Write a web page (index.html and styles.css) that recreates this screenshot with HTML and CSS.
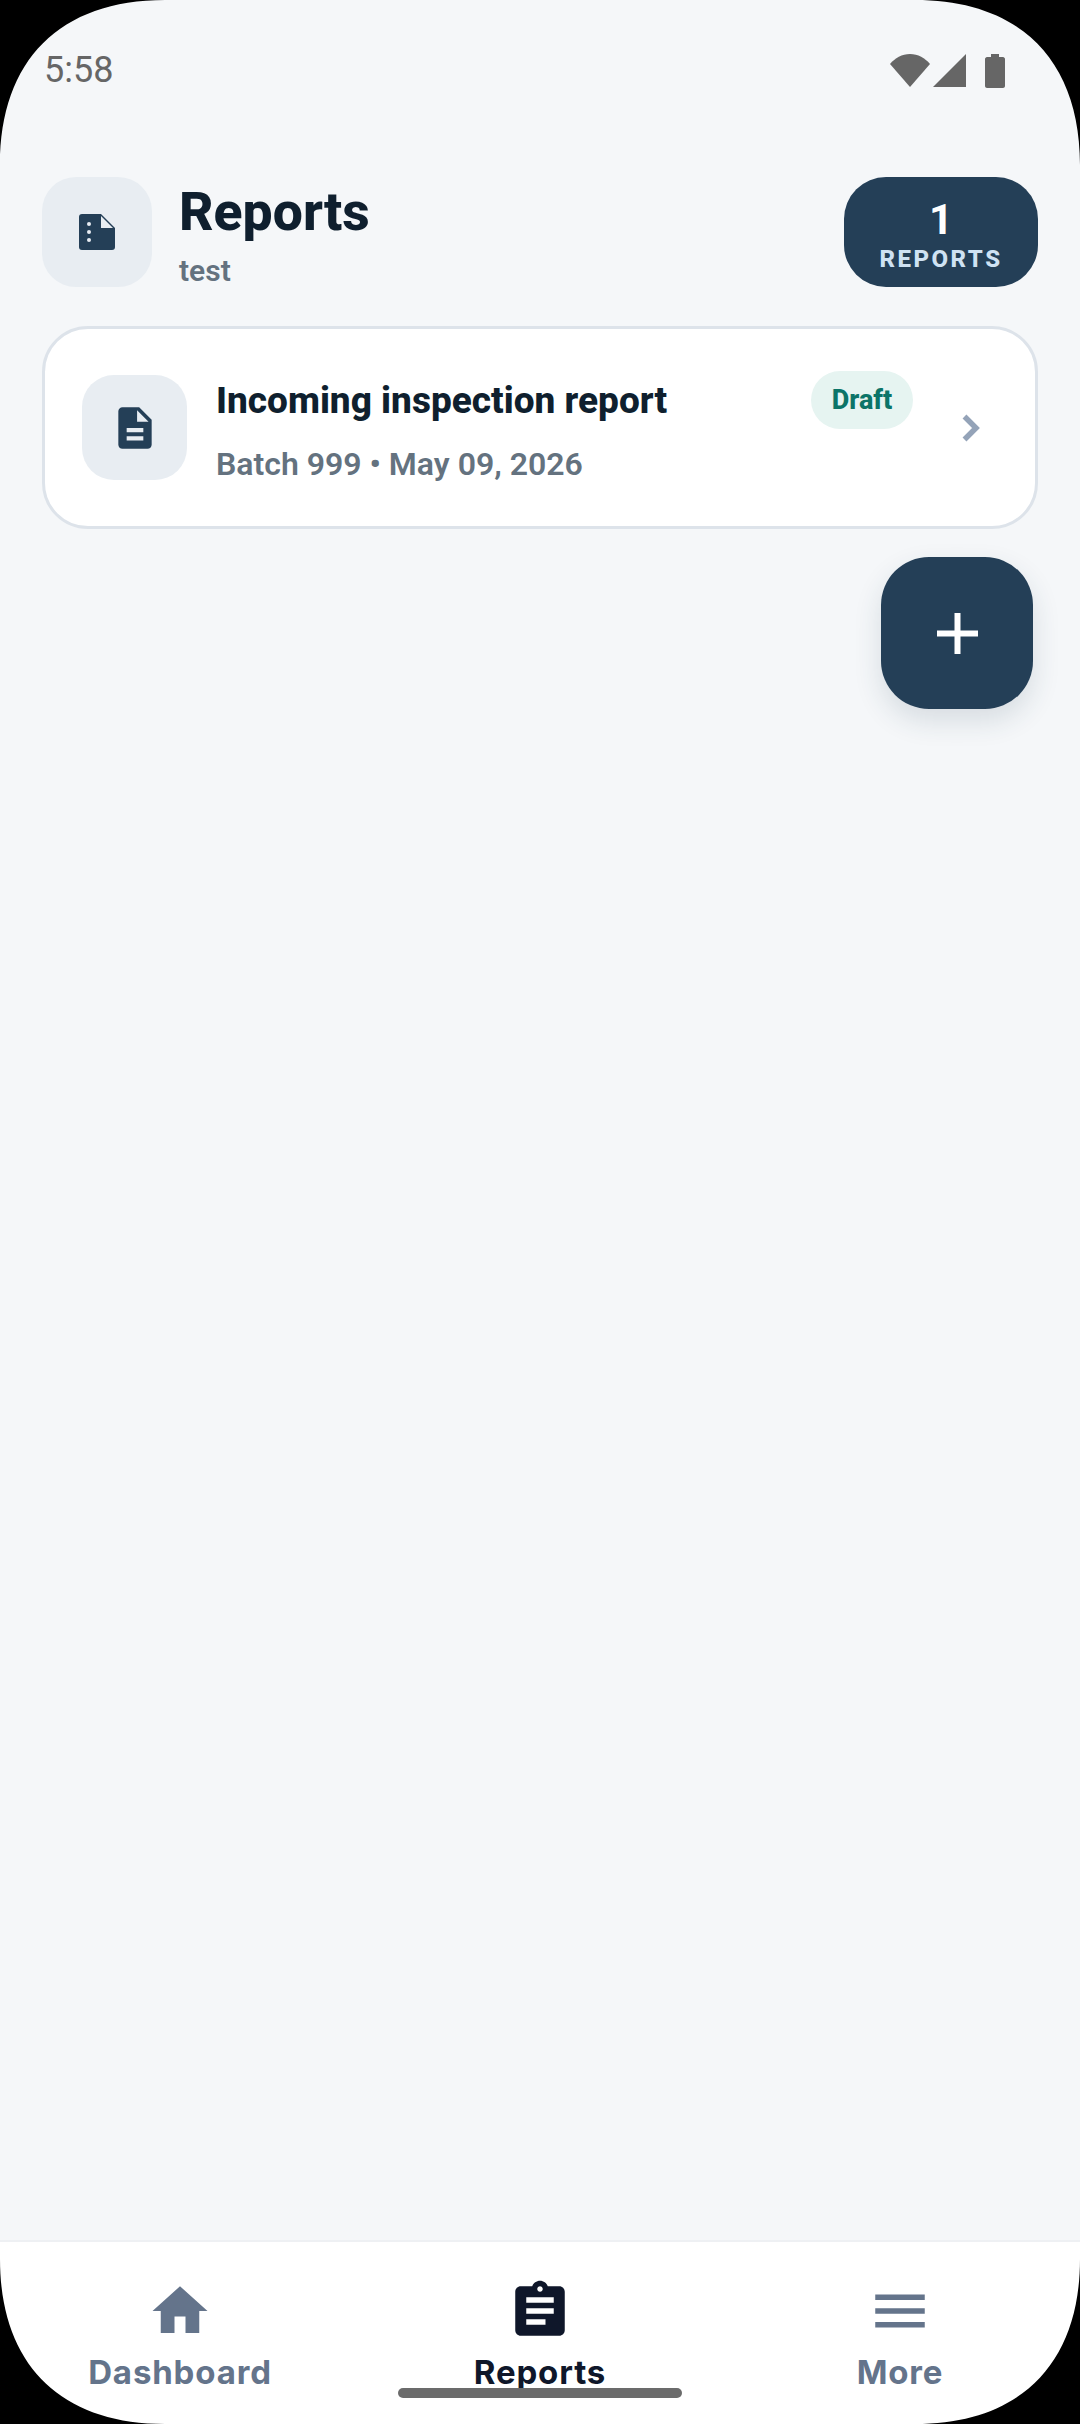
FILE: index.html
```html
<!DOCTYPE html>
<html lang="en">
<head>
    <meta charset="UTF-8">
    <meta name="viewport" content="width=device-width, initial-scale=1.0">
    <title>Reports</title>
    <link rel="stylesheet" href="styles.css">
</head>
<body>
    <div class="screen">
        <div class="status-bar">
            <span class="status-time">5:58</span>
            <div class="status-icons">
                <svg class="icon-wifi" viewBox="0 0 40 33"><path d="M0 10C5 4 12 0 20 0s15 4 20 10L20 33z"/></svg>
                <svg class="icon-signal" viewBox="0 0 33 33"><path d="M33 0v33H0z"/></svg>
                <svg class="icon-battery" viewBox="0 0 20 34"><path d="M6 0h8v3h4c1 0 2 1 2 2v27c0 1-1 2-2 2H2c-1 0-2-1-2-2V5c0-1 1-2 2-2h4z"/></svg>
            </div>
        </div>

        <header class="header">
            <div class="header-icon">
                <svg viewBox="0 0 36 36" width="36" height="36">
                    <path class="fill-dark" d="M3 0h19l14 14v19c0 2-1 3-3 3H3c-2 0-3-1-3-3V3c0-2 1-3 3-3z"/>
                    <path class="fill-soft" d="M22 2v12h12z"/>
                    <circle class="fill-soft" cx="10" cy="10" r="2"/>
                    <circle class="fill-soft" cx="10" cy="18" r="2"/>
                    <circle class="fill-soft" cx="10" cy="26" r="2"/>
                </svg>
            </div>
            <div class="header-text">
                <h1>Reports</h1>
                <p>test</p>
            </div>
            <div class="count-badge">
                <span class="count-number">1</span>
                <span class="count-label">REPORTS</span>
            </div>
        </header>

        <div class="report-card">
            <div class="report-icon">
                <svg viewBox="0 0 24 24" width="50" height="50">
                    <path class="fill-dark" d="M14 2H6c-1.1 0-2 .9-2 2v16c0 1.1.9 2 2 2h12c1.100 0 2-.9 2-2V8l-6-6zm2 16H8v-2h8v2zm0-4H8v-2h8v2zm-3-5V3.500L18.500 9H13z"/>
                </svg>
            </div>
            <div class="report-body">
                <div class="report-top">
                    <span class="report-title">Incoming inspection report</span>
                    <span class="report-status">Draft</span>
                </div>
                <div class="report-meta">Batch 999 • May 09, 2026</div>
            </div>
            <svg class="chevron" viewBox="0 0 18 28"><path d="M2.500 2.500L14 14 2.500 25.500" fill="none" stroke="#94a3b8" stroke-width="5.500"/></svg>
        </div>

        <button class="fab">
            <svg viewBox="0 0 41 41" width="41" height="41"><path d="M17.500 0h6v17.500H41v6H23.500V41h-6V23.500H0v-6h17.500z" fill="#fff"/></svg>
        </button>

        <nav class="bottom-nav">
            <div class="nav-item">
                <svg viewBox="0 0 24 24" width="66" height="66"><path d="M10 20v-6h4v6h5v-8h3L12 3 2 12h3v8z"/></svg>
                <span>Dashboard</span>
            </div>
            <div class="nav-item active">
                <svg viewBox="0 0 24 24" width="66" height="66"><path d="M19 3h-4.180C14.400 1.840 13.300 1 12 1c-1.300 0-2.400.84-2.820 2H5c-1.100 0-2 .9-2 2v14c0 1.100.9 2 2 2h14c1.100 0 2-.9 2-2V5c0-1.100-.9-2-2-2zm-7 0c.55 0 1 .45 1 1s-.45 1-1 1-1-.45-1-1 .45-1 1-1zm2 14H7v-2h7v2zm3-4H7v-2h10v2zm0-4H7V7h10v2z"/></svg>
                <span>Reports</span>
            </div>
            <div class="nav-item">
                <svg viewBox="0 0 24 24" width="66" height="66"><path d="M3 18h18v-2H3v2zm0-5h18v-2H3v2zm0-7v2h18V6H3z"/></svg>
                <span>More</span>
            </div>
        </nav>

        <div class="home-indicator"></div>

        <!-- rounded display corners -->
        <svg class="corner top-left" viewBox="0 0 165 165"><path d="M0 0h165C60 0 0 60 0 165z"/></svg>
        <svg class="corner top-right" viewBox="0 0 165 165"><path d="M0 0h165C60 0 0 60 0 165z"/></svg>
        <svg class="corner bottom-left" viewBox="0 0 165 165"><path d="M0 0h165C60 0 0 60 0 165z"/></svg>
        <svg class="corner bottom-right" viewBox="0 0 165 165"><path d="M0 0h165C60 0 0 60 0 165z"/></svg>
    </div>
</body>
</html>
```

FILE: styles.css
```css
:root {
    --fundo: #f5f7f9;
    --azul: #243f57;
    --texto: #0f1f2e;
    --cinza: #64727f;
    --suave: #e8edf2;
    --nav-cinza: #64748b;
    --nav-ativo: #0f172a;
}

* {
    margin: 0;
    padding: 0;
    box-sizing: border-box;
    font-family: Roboto, 'Liberation Sans', sans-serif;
}

body {
    background-color: #000;
    width: 1080px;
    height: 2424px;
    overflow: hidden;
}

.screen {
    position: relative;
    width: 1080px;
    height: 2424px;
    background-color: var(--fundo);
    display: flex;
    flex-direction: column;
    overflow: hidden;
}

.fill-dark {
    fill: var(--azul);
}

.fill-soft {
    fill: var(--suave);
}

/* status bar */
.status-bar {
    height: 177px;
    padding: 50px 75px 0 44px;
    display: flex;
    justify-content: space-between;
    align-items: flex-start;
    flex-shrink: 0;
}

.status-time {
    font-size: 36px;
    line-height: 41px;
    color: #666;
}

.status-icons {
    display: flex;
    align-items: flex-start;
    margin-top: 4px;
}

.status-icons svg {
    fill: #666;
    display: block;
}

.icon-wifi {
    width: 40px;
    height: 33px;
}

.icon-signal {
    width: 33px;
    height: 33px;
    margin-left: 3px;
}

.icon-battery {
    width: 20px;
    height: 34px;
    margin-left: 19px;
}

/* header */
.header {
    height: 110px;
    padding: 0 42px;
    display: flex;
    align-items: center;
    flex-shrink: 0;
}

.header-icon {
    width: 110px;
    height: 110px;
    border-radius: 34px;
    background-color: var(--suave);
    display: flex;
    align-items: center;
    justify-content: center;
}

.header-text {
    flex: 1;
    margin-left: 27px;
    padding-top: 6px;
}

.header-text h1 {
    font-size: 53.500px;
    line-height: 62px;
    font-weight: 800;
    color: var(--texto);
}

.header-text p {
    font-size: 30px;
    line-height: 36px;
    font-weight: 600;
    color: var(--cinza);
    margin-top: 10px;
}

.count-badge {
    width: 194px;
    height: 110px;
    padding-top: 3px;
    border-radius: 42px;
    background-color: var(--azul);
    display: flex;
    flex-direction: column;
    align-items: center;
    justify-content: center;
}

.count-number {
    font-size: 42px;
    line-height: 50px;
    font-weight: 700;
    color: #fff;
}

.count-label {
    font-size: 24px;
    line-height: 28px;
    font-weight: 800;
    letter-spacing: 2.500px;
    color: #cfe2f3;
}

/* report card */
.report-card {
    height: 203px;
    margin: 39px 42px 0;
    padding: 0 0 0 37px;
    border: 3px solid #dde3ea;
    border-radius: 46px;
    background-color: #fff;
    display: flex;
    align-items: center;
    flex-shrink: 0;
}

.report-icon {
    width: 105px;
    height: 105px;
    border-radius: 32px;
    background-color: var(--suave);
    display: flex;
    align-items: center;
    justify-content: center;
    flex-shrink: 0;
}

.report-body {
    width: 697px;
    margin-left: 29px;
}

.report-top {
    display: flex;
    align-items: center;
    justify-content: space-between;
    height: 58px;
}

.report-title {
    font-size: 37px;
    font-weight: 800;
    color: var(--texto);
}

.report-status {
    width: 102px;
    height: 58px;
    border-radius: 29px;
    background-color: #e6f4f1;
    color: #0b7468;
    font-size: 27px;
    font-weight: 800;
    display: flex;
    align-items: center;
    justify-content: center;
}

.report-meta {
    font-size: 32px;
    line-height: 40px;
    font-weight: 600;
    color: var(--cinza);
    margin-top: 15px;
}

.chevron {
    width: 18px;
    height: 28px;
    margin-left: 49px;
    flex-shrink: 0;
}

/* add button */
.fab {
    width: 152px;
    height: 152px;
    margin: 28px 47px 0 auto;
    border: none;
    border-radius: 48px;
    background-color: var(--azul);
    box-shadow: 0 12px 28px rgba(36, 63, 87, 0.14);
    display: flex;
    align-items: center;
    justify-content: center;
    flex-shrink: 0;
}

/* bottom nav */
.bottom-nav {
    margin-top: auto;
    height: 184px;
    padding-top: 36px;
    border-top: 2px solid #eef0f3;
    background-color: #fff;
    display: grid;
    grid-template-columns: repeat(3, 1fr);
    flex-shrink: 0;
}

.nav-item {
    display: flex;
    flex-direction: column;
    align-items: center;
    color: var(--nav-cinza);
    fill: var(--nav-cinza);
}

.nav-item.active {
    color: var(--nav-ativo);
    fill: var(--nav-ativo);
}

.nav-item span {
    font-family: Inter, 'Liberation Sans', sans-serif;
    font-size: 33px;
    line-height: 38px;
    font-weight: 700;
    letter-spacing: 0.850px;
    margin-top: 9px;
}

.home-indicator {
    position: absolute;
    left: 398px;
    top: 2388px;
    width: 284px;
    height: 10px;
    border-radius: 5px;
    background-color: #6b6b6b;
}

/* display corners */
.corner {
    position: absolute;
    width: 165px;
    height: 165px;
    fill: #000;
}

.top-left {
    top: 0;
    left: 0;
}

.top-right {
    top: 0;
    right: 0;
    transform: scaleX(-1);
}

.bottom-left {
    bottom: 0;
    left: 0;
    transform: scaleY(-1);
}

.bottom-right {
    bottom: 0;
    right: 0;
    transform: scale(-1, -1);
}
```
